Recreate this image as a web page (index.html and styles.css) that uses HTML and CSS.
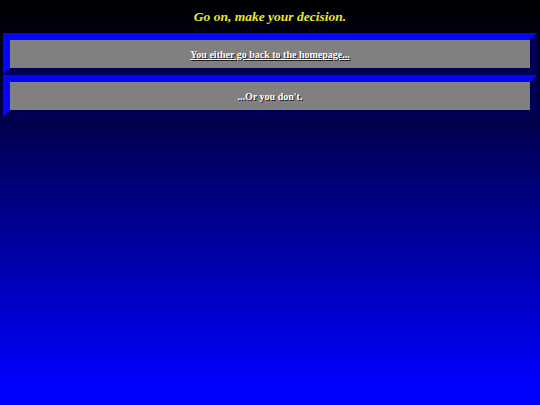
FILE: index.html
```html
<!DOCTYPE html>
<html>
<head>
<meta charset="utf-8">
<title>Decision</title>
<link rel="stylesheet" href="styles.css">
</head>
<body>
<h1 class="title">Go on, make your decision.</h1>
<div class="choices">
  <div class="choice"><a class="choice-link" href="#">You either go back to the homepage...</a></div>
  <div class="choice"><span class="choice-text">...Or you don't.</span></div>
</div>
</body>
</html>
```
FILE: styles.css
```css
html {
  height: 100%;
}
body {
  margin: 0;
  min-height: 100%;
  background: linear-gradient(to bottom, #000000 0%, #000010 8%, #0000ff 95%);
  font-family: "Liberation Serif", "Times New Roman", serif;
}
.title {
  margin: 0;
  height: 33px;
  line-height: 33px;
  text-align: center;
  font-size: 13.5px;
  font-weight: bold;
  font-style: italic;
  color: #e8e832;
}
.choices {
  display: flex;
  flex-direction: column;
  padding: 0 3px;
}
.choice {
  height: 28px;
  border: 7px solid;
  border-color: #0505fa #000055 #000055 #0505fa;
  background: #808080;
  display: flex;
  align-items: center;
  justify-content: center;
  font-size: 10px;
  font-weight: bold;
  color: #ffffff;
  text-shadow: 1px 1px 0 #202020;
}
.choice-link {
  color: #ffffff;
  text-decoration: underline;
}
```
